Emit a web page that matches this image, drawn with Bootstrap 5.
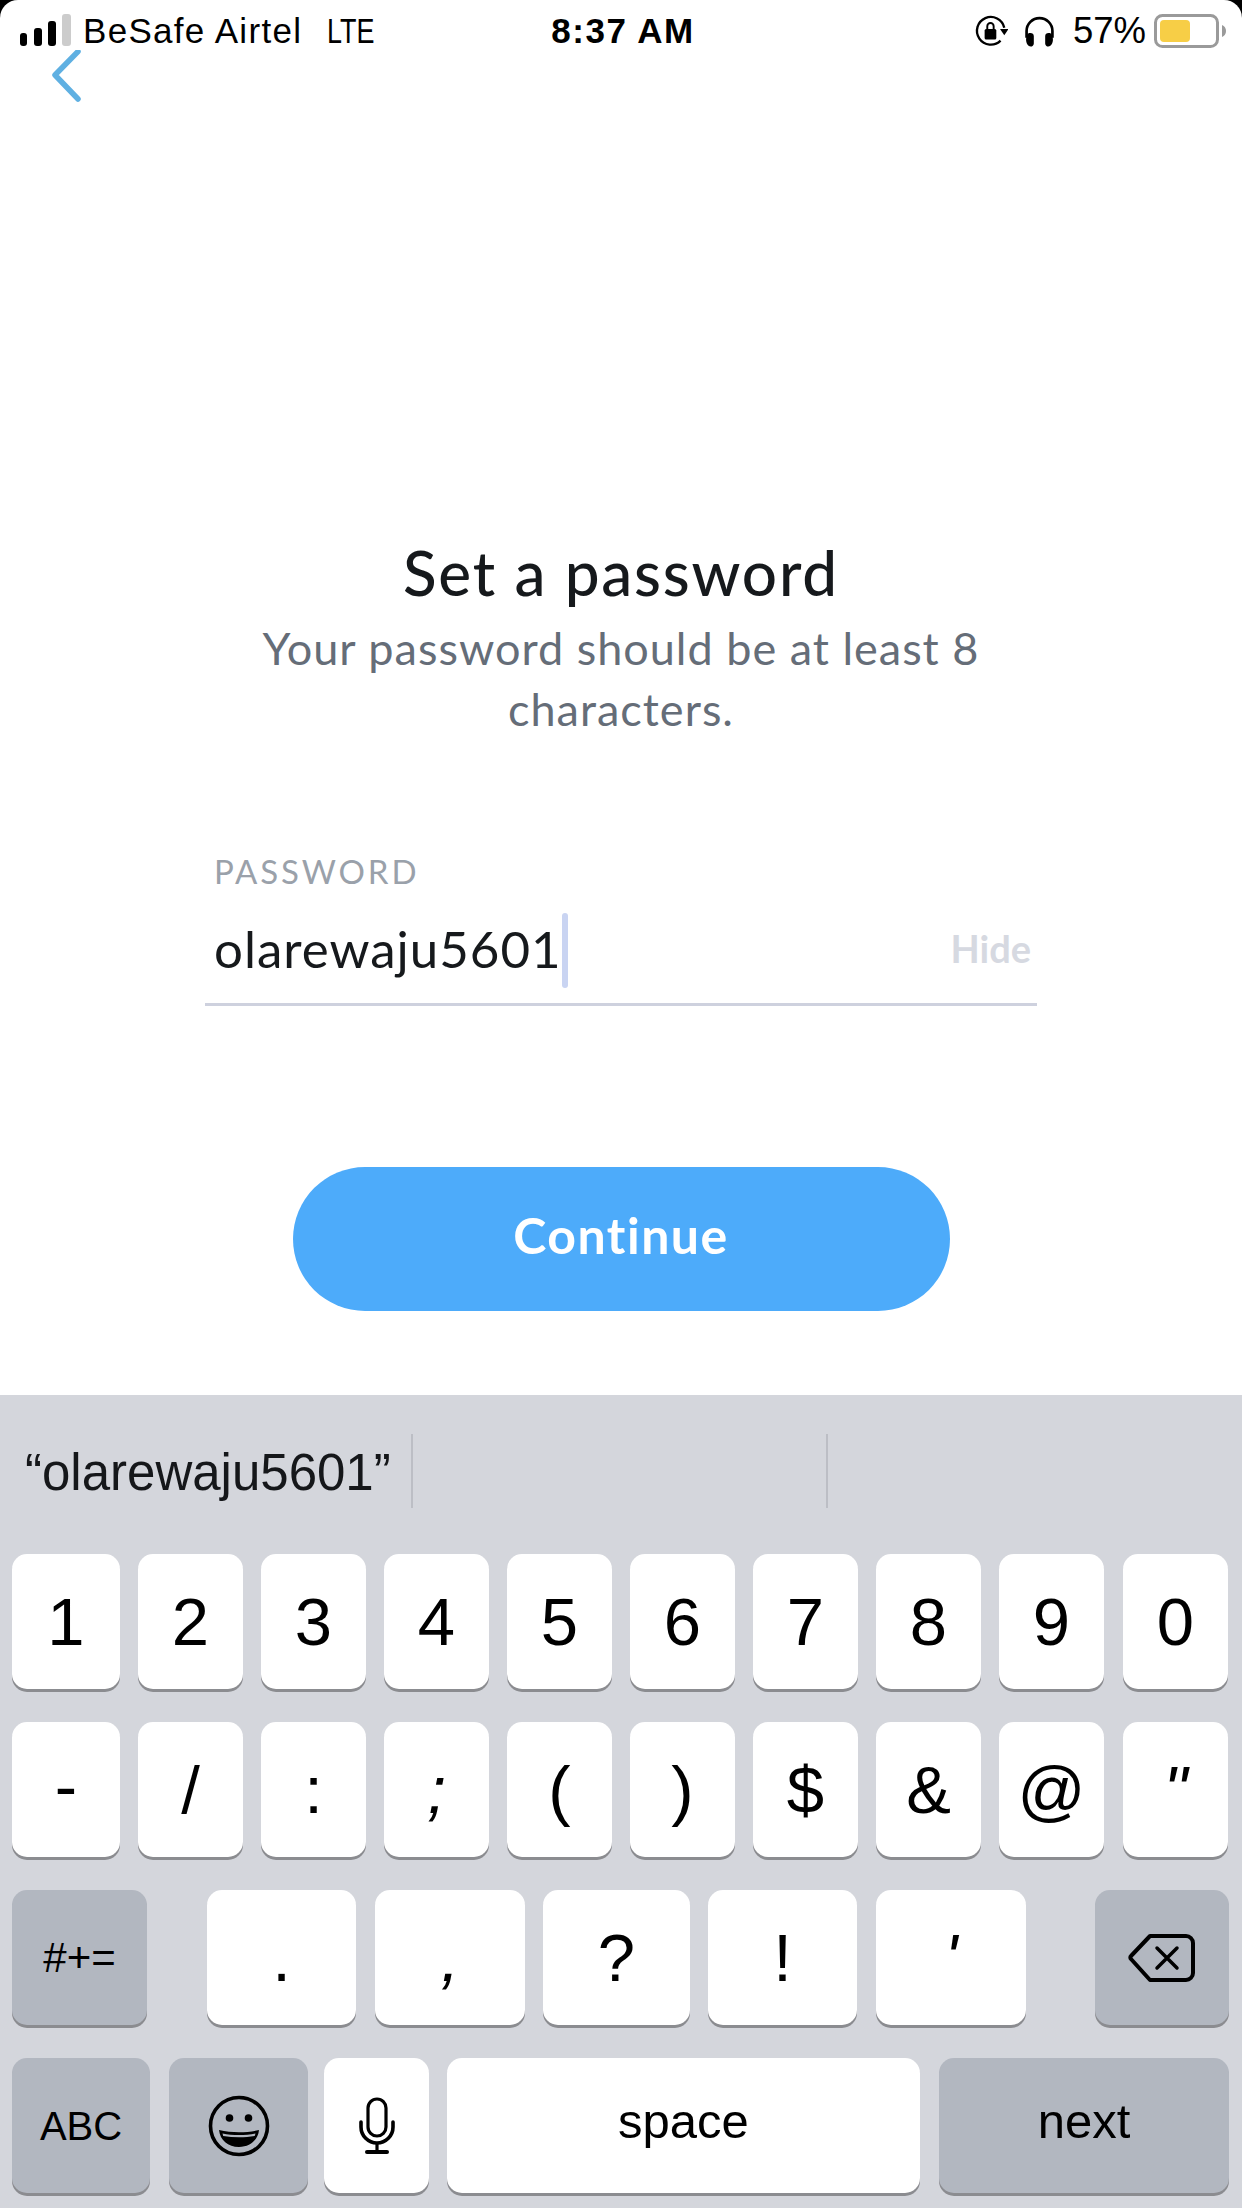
<!DOCTYPE html>
<html lang="en">
<head>
<meta charset="utf-8">
<title>Set a password</title>
<link href="https://cdn.jsdelivr.net/npm/bootstrap@5.3.0/dist/css/bootstrap.min.css" rel="stylesheet">
<style>
html,body{margin:0;background:#fff}
.screen{width:1242px;height:2208px;overflow:hidden;position:relative;background:#fff;font-family:"Liberation Sans",Arial,sans-serif;color:#000}
.corner{position:absolute;top:0;width:18px;height:18px;background:#000;z-index:5}
.corner i{display:block;width:100%;height:100%;background:#fff}
.corner-l{left:0}.corner-l i{border-top-left-radius:18px}
.corner-r{right:0}.corner-r i{border-top-right-radius:18px}
.statusbar{height:50px;padding:12px 16px 0 20px;font-size:35px;line-height:38px}
.status-side{flex:1 1 0}
.carrier{letter-spacing:1.3px;margin-left:11px}
.net{display:inline-block;font-size:35px;transform:scaleX(.77);transform-origin:left center;margin-left:25px}
.clock{font-weight:700;letter-spacing:1.5px}
.pct{font-size:36.500px;margin-left:18px}
.backrow{height:50px;padding-left:50px}
.hero{font-family:Lato,"Liberation Sans",sans-serif;padding-top:436px}
.hero-title{font-size:62px;line-height:72px;font-weight:500;color:#16191c;letter-spacing:1.8px;margin:0 0 10px}
.hero-sub{font-size:45px;line-height:61px;color:#656d78;letter-spacing:1px;width:760px;margin:0 auto}
.pw-field{width:832px;margin:113px auto 0;padding:0}
.pw-label{font-size:33px;line-height:36px;letter-spacing:2.900px;color:#9aa1aa;padding-left:9px;margin:0}
.pw-row{height:90px;padding:16px 6px 0 9px;margin-top:8px;border-bottom:3px solid #ced1de;box-sizing:content-box}
.pw-text{font-size:51px;line-height:72px;color:#16191c;letter-spacing:1px}
.caret-bar{width:6px;height:75px;background:#c9d4f2;border-radius:3px}
.pw-hide{font-size:38px;line-height:70px;font-weight:700;color:#d6d9e1;margin-left:auto}
.go-btn{display:block;width:657px;height:144px;margin:161px auto 0;padding-bottom:14px;border-radius:72px;background:#4dabfa;border:0;color:#fff;font-family:Lato,"Liberation Sans",sans-serif;font-size:50px;font-weight:700;letter-spacing:1.500px}
.kbd{position:absolute;left:0;right:0;bottom:0;height:813px;background:#d4d6dc}
.suggest{height:159px;padding-top:39px}
.suggest-cell{height:74px;font-size:51px;line-height:77px;color:#15171a}
.cell-a{width:413px;padding-left:25px;border-right:2px solid #bcbec5}
.cell-b{width:415px;border-right:2px solid #bcbec5}
.kbd-row{height:135px;margin-bottom:33px;padding-left:12px;gap:18px}
.kkey{width:105px;height:135px;border-radius:15px;background:#fff;box-shadow:0 3px 0 #8b8c90;font-size:67px;line-height:1;color:#000}
.kkey-gray{background:#b2b7c0}
.w108{width:108px}.w147{width:147px}.w149{width:149px}.w150{width:150px}
.w135{width:135px}.w134{width:134px}.w138{width:138px}.w139{width:139px}.w473{width:473px}.w290{width:290px}
.ml1{margin-left:1px}.ml42{margin-left:42px}.ml51{margin-left:51px}.mln2{margin-left:-2px}
.slant{font-style:italic}
.nudge-up{padding-bottom:8px}
.fs-sm{font-size:42px}.fs-abc{font-size:40px}.fs-word{font-size:49px;padding-bottom:8px}
</style>
</head>
<body>
<div class="screen d-flex flex-column">
  <div class="corner corner-l"><i></i></div>
  <div class="corner corner-r"><i></i></div>

  <div class="statusbar d-flex align-items-start">
    <div class="status-side d-flex align-items-center">
      <svg width="52" height="34" viewBox="0 0 52 34" class="flex-shrink-0"><rect x="0" y="19" width="7" height="13" rx="3" fill="#000"/><rect x="14" y="14" width="8" height="18" rx="3" fill="#000"/><rect x="28" y="7" width="8" height="25" rx="3" fill="#000"/><rect x="42" y="0" width="9" height="32" rx="3" fill="#ccc"/></svg>
      <span class="carrier">BeSafe Airtel</span><span class="net">LTE</span>
    </div>
    <div class="clock">8:37 AM</div>
    <div class="status-side d-flex align-items-center justify-content-end">
      <svg width="34" height="34" viewBox="0 0 32 32" class="flex-shrink-0"><path d="M25 25A13 13 0 1 1 28.500 13" fill="none" stroke="#000" stroke-width="2.200"/><path d="M24.500 14h8l-4 6z" fill="#000"/><rect x="10" y="14" width="11" height="10" rx="1.500" fill="#000"/><path d="M12.500 14v-2.500a3 3 0 0 1 6 0V14" fill="none" stroke="#000" stroke-width="1.800"/></svg>
      <svg width="31" height="31" viewBox="0 0 30 30" class="flex-shrink-0 ms-3"><path d="M2.500 21V14.500a12.500 12.500 0 0 1 25 0V21" fill="none" stroke="#000" stroke-width="2.600"/><path d="M5 16.500c2.500-.5 4.500.5 4.500 3v7c0 2-1.500 3-3 3-2.500 0-4.500-3-4.500-6.500 0-3 1-6 3-6.500zM25 16.500c-2.500-.5-4.500.5-4.500 3v7c0 2 1.500 3 3 3 2.500 0 4.500-3 4.500-6.500 0-3-1-6-3-6.500z" fill="#000"/></svg>
      <span class="pct">57%</span>
      <svg width="72" height="34" viewBox="0 0 72 34" class="flex-shrink-0 ms-2"><rect x="1.500" y="1.500" width="62" height="31" rx="7" fill="#fff" stroke="#9a9a9a" stroke-width="3"/><rect x="6" y="6" width="30" height="22" rx="4" fill="#f7ce46"/><path d="M68 11c2.500 1 4 3 4 6s-1.500 5-4 6z" fill="#9a9a9a"/></svg>
    </div>
  </div>

  <div class="backrow">
    <svg width="32" height="54" viewBox="0 0 32 54"><path d="M28 1.500L5 25 28 49" fill="none" stroke="#5fb0e2" stroke-width="5.500" stroke-linecap="round" stroke-linejoin="round"/></svg>
  </div>

  <div class="hero text-center">
    <h1 class="hero-title">Set a password</h1>
    <p class="hero-sub">Your password should be at least 8 characters.</p>
    <div class="pw-field text-start">
      <div class="pw-label">PASSWORD</div>
      <div class="pw-row d-flex align-items-start">
        <span class="pw-text">olarewaju5601</span><span class="caret-bar"></span>
        <span class="pw-hide">Hide</span>
      </div>
    </div>
    <button type="button" class="btn go-btn">Continue</button>
  </div>

  <div class="kbd">
    <div class="suggest d-flex">
      <div class="suggest-cell cell-a">“olarewaju5601”</div>
      <div class="suggest-cell cell-b"></div>
    </div>
    <div class="kbd-row d-flex">
      <div class="kkey w108 d-flex align-items-center justify-content-center">1</div>
      <div class="kkey d-flex align-items-center justify-content-center">2</div>
      <div class="kkey d-flex align-items-center justify-content-center">3</div>
      <div class="kkey d-flex align-items-center justify-content-center">4</div>
      <div class="kkey d-flex align-items-center justify-content-center">5</div>
      <div class="kkey d-flex align-items-center justify-content-center">6</div>
      <div class="kkey d-flex align-items-center justify-content-center">7</div>
      <div class="kkey d-flex align-items-center justify-content-center">8</div>
      <div class="kkey d-flex align-items-center justify-content-center">9</div>
      <div class="kkey ml1 d-flex align-items-center justify-content-center">0</div>
    </div>
    <div class="kbd-row d-flex">
      <div class="kkey w108 nudge-up d-flex align-items-center justify-content-center">-</div>
      <div class="kkey d-flex align-items-center justify-content-center">/</div>
      <div class="kkey d-flex align-items-center justify-content-center">:</div>
      <div class="kkey d-flex align-items-center justify-content-center slant">;</div>
      <div class="kkey d-flex align-items-center justify-content-center">(</div>
      <div class="kkey d-flex align-items-center justify-content-center">)</div>
      <div class="kkey d-flex align-items-center justify-content-center">$</div>
      <div class="kkey d-flex align-items-center justify-content-center">&amp;</div>
      <div class="kkey d-flex align-items-center justify-content-center">@</div>
      <div class="kkey ml1 d-flex align-items-center justify-content-center slant">"</div>
    </div>
    <div class="kbd-row d-flex">
      <div class="kkey kkey-gray w135 fs-sm d-flex align-items-center justify-content-center">#+=</div>
      <div class="kkey w149 ml42 d-flex align-items-center justify-content-center">.</div>
      <div class="kkey w150 ml1 d-flex align-items-center justify-content-center slant">,</div>
      <div class="kkey w147 d-flex align-items-center justify-content-center">?</div>
      <div class="kkey w149 d-flex align-items-center justify-content-center">!</div>
      <div class="kkey w150 ml1 d-flex align-items-center justify-content-center slant">'</div>
      <div class="kkey kkey-gray w134 ml51 d-flex align-items-center justify-content-center">
        <svg width="72" height="52" viewBox="0 0 72 52"><path d="M24 4H60a7 7 0 0 1 7 7V41a7 7 0 0 1-7 7H24L5 27a2 2 0 0 1 0-3z" fill="none" stroke="#000" stroke-width="4" stroke-linejoin="round"/><path d="M31 16L51 36M51 16L31 36" stroke="#000" stroke-width="3.500" stroke-linecap="round"/></svg>
      </div>
    </div>
    <div class="kbd-row d-flex">
      <div class="kkey kkey-gray w138 fs-abc d-flex align-items-center justify-content-center">ABC</div>
      <div class="kkey kkey-gray w139 ml1 d-flex align-items-center justify-content-center">
        <svg width="62" height="62" viewBox="0 0 62 62"><circle cx="31" cy="31" r="28.500" fill="none" stroke="#000" stroke-width="3.600"/><circle cx="21.500" cy="23" r="3.800" fill="#000"/><circle cx="40.500" cy="23" r="3.800" fill="#000"/><path d="M11 35c13 3 27 3 40 0-1 10-9 17-20 17S12 45 11 35z" fill="#000"/><path d="M14.500 38.500c10 2 23 2 33 0l-.8 2.500c-10 1.800-21 1.800-31.500 0z" fill="#b2b7c0"/></svg>
      </div>
      <div class="kkey mln2 d-flex align-items-center justify-content-center">
        <svg width="36" height="58" viewBox="0 0 36 58"><rect x="9" y="2" width="18" height="37" rx="9" fill="none" stroke="#000" stroke-width="3.200"/><path d="M2 25v5a16 16 0 0 0 32 0v-5" fill="none" stroke="#000" stroke-width="3.600" stroke-linecap="round"/><path d="M18 46v8" stroke="#000" stroke-width="3.200"/><path d="M8 55h20" stroke="#000" stroke-width="4" stroke-linecap="round"/></svg>
      </div>
      <div class="kkey w473 fs-word d-flex align-items-center justify-content-center">space</div>
      <div class="kkey kkey-gray w290 ml1 fs-word d-flex align-items-center justify-content-center">next</div>
    </div>
  </div>
</div>
<script src="https://cdn.jsdelivr.net/npm/bootstrap@5.3.0/dist/js/bootstrap.bundle.min.js"></script>
</body>
</html>
